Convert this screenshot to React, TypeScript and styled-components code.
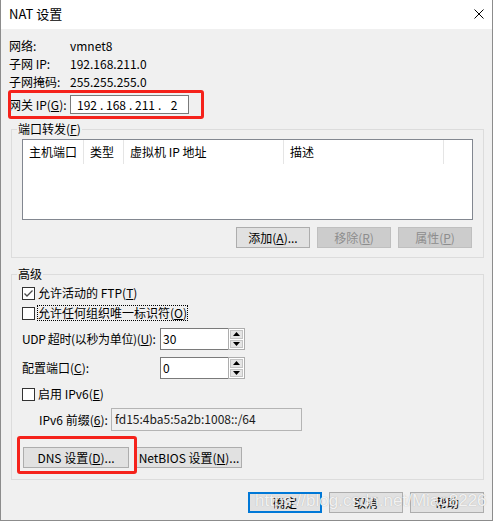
import React from "react";
import styled, { createGlobalStyle } from "styled-components";

const GlobalStyle = createGlobalStyle`
  html, body { margin: 0; padding: 0; background: #ffffff; }
  body {
    font-family: "Noto Sans CJK SC", "Microsoft YaHei", sans-serif;
    font-size: 12px;
    color: #000;
  }
  * { box-sizing: border-box; }
`;

const Window = styled.div`
  position: relative;
  width: 493px;
  height: 521px;
  border: 1px solid #8c8c8c;
  border-top: none;
  background: #f0f0f0;
  display: flex;
  flex-direction: column;
`;

const TitleBar = styled.div`
  height: 29px;
  flex-shrink: 0;
  background: #ffffff;
  display: flex;
  align-items: center;
  justify-content: space-between;
  padding: 0 8px 2px 8px;
`;

const Title = styled.span`
  font-size: 13px;
  line-height: 16px;
`;

const Body = styled.div`
  display: flex;
  flex-direction: column;
  padding: 8px 8px 0 8px;
`;

const InfoRow = styled.div<{ $h: number; $mt?: number }>`
  display: grid;
  grid-template-columns: 61px auto;
  align-items: center;
  height: ${(p) => p.$h}px;
  margin-top: ${(p) => p.$mt ?? 0}px;
  line-height: 16px;
  white-space: nowrap;
`;

const Key = styled.u`
  text-decoration: underline;
  text-underline-offset: 1px;
`;

const IpBox = styled.div`
  width: 119px;
  height: 19px;
  border: 1px solid #7a7a7a;
  background: #fff;
  display: flex;
  align-items: center;
  padding-left: 3px;
  line-height: 16px;
`;

const IpSeg = styled.span`
  width: 26px;
  text-align: center;
`;

const IpDot = styled.span`
  width: 3px;
  text-align: center;
`;

const Group = styled.fieldset<{ $mt: number }>`
  margin: ${(p) => p.$mt}px 0 0 2px;
  padding: 0;
  width: 473px;
  min-width: 0;
  border: 1px solid #dcdcdc;
`;

const Legend = styled.legend`
  margin-left: 5px;
  padding: 0 1px;
  line-height: 16px;
  font-size: 12px;
`;

const GroupInner = styled.div<{ $pt: number; $pb: number }>`
  display: flex;
  flex-direction: column;
  padding: ${(p) => p.$pt}px 10px ${(p) => p.$pb}px 10px;
`;

const ListView = styled.div`
  height: 81px;
  border: 1px solid #828790;
  background: #fff;
`;

const HeaderRow = styled.div`
  display: flex;
  height: 24px;
`;

const HeaderCell = styled.div<{ $w: number }>`
  width: ${(p) => p.$w}px;
  height: 100%;
  display: flex;
  align-items: center;
  padding-left: 6px;
  border-right: 1px solid #e5e5e5;
  line-height: 16px;
  white-space: nowrap;
`;

const ButtonRow = styled.div<{ $mt: number; $justify?: string; $pl?: number; $pr?: number }>`
  display: flex;
  justify-content: ${(p) => p.$justify ?? "flex-start"};
  gap: 7px;
  margin-top: ${(p) => p.$mt}px;
  padding-left: ${(p) => p.$pl ?? 0}px;
  padding-right: ${(p) => p.$pr ?? 0}px;
`;

const Button = styled.button<{ $w: number; $primary?: boolean }>`
  width: ${(p) => p.$w}px;
  height: 21px;
  padding: 0;
  margin: 0;
  font-family: inherit;
  font-size: 12px;
  line-height: 16px;
  color: #000;
  white-space: nowrap;
  background: #e1e1e1;
  border: ${(p) => (p.$primary ? "2px solid #0078d7" : "1px solid #adadad")};
  border-radius: 0;

  &:disabled {
    background: #cccccc;
    border-color: #bfbfbf;
    color: #8d8d8d;
  }
`;

const CheckRow = styled.div<{ $mt?: number }>`
  display: flex;
  align-items: center;
  gap: 3px;
  height: 20px;
  margin-top: ${(p) => p.$mt ?? 0}px;
  line-height: 16px;
  white-space: nowrap;
`;

const CheckBox = styled.span`
  width: 13px;
  height: 13px;
  flex-shrink: 0;
  border: 1px solid #333;
  background: #fff;
  display: inline-flex;
  align-items: center;
  justify-content: center;
`;

const FocusLabel = styled.span`
  outline: 1px dotted #000;
  line-height: 14px;
`;

const FieldRow = styled.div<{ $mt: number; $h: number; $cols: string; $pl?: number }>`
  display: grid;
  grid-template-columns: ${(p) => p.$cols};
  align-items: center;
  height: ${(p) => p.$h}px;
  margin-top: ${(p) => p.$mt}px;
  padding-left: ${(p) => p.$pl ?? 0}px;
  line-height: 16px;
  white-space: nowrap;
`;

const TightLabel = styled.span`
  letter-spacing: -0.35px;
`;

const SpinField = styled.div`
  display: flex;
  width: 85px;
  height: 22px;
`;

const SpinInput = styled.div`
  flex: 1;
  border: 1px solid #7a7a7a;
  border-right: none;
  background: #fff;
  padding: 2px 0 0 2px;
  line-height: 16px;
`;

const SpinButtons = styled.div`
  width: 17px;
  display: flex;
  flex-direction: column;
  border: 1px solid #adadad;
  background: #fff;
  padding: 1px;
  gap: 1px;
`;

const SpinButton = styled.div`
  flex: 1;
  background: #e5e5e5;
  border: 1px solid #c4c4c4;
  display: flex;
  align-items: center;
  justify-content: center;
`;

const ReadOnlyBox = styled.div`
  width: 191px;
  height: 23px;
  border: 1px solid #b4b4b4;
  background: #f0f0f0;
  padding: 2px 0 0 3px;
  line-height: 16px;
  color: #1a1a1a;
`;

const Annotation = styled.div<{ $x: number; $y: number; $w: number; $h: number }>`
  position: absolute;
  left: ${(p) => p.$x}px;
  top: ${(p) => p.$y}px;
  width: ${(p) => p.$w}px;
  height: ${(p) => p.$h}px;
  border: 3px solid #f5221b;
  border-radius: 3px;
  pointer-events: none;
`;

const Watermark = styled.div`
  position: absolute;
  left: 254px;
  top: 491px;
  font-family: "Liberation Sans", Arial, sans-serif;
  font-size: 17px;
  line-height: 20px;
  color: rgba(255, 255, 255, 0.85);
  text-shadow: 0 0 1px rgba(120, 120, 120, 0.55);
  pointer-events: none;
  white-space: nowrap;
`;

const CloseIcon = () => (
  <svg width="10" height="10" viewBox="0 0 10 10">
    <path d="M0.5 0.5 L9.5 9.5 M9.5 0.5 L0.5 9.5" stroke="#000" strokeWidth="1" fill="none" />
  </svg>
);

const Check = () => (
  <svg width="11" height="11" viewBox="0 0 11 11">
    <polyline points="1.5,5.5 4,8 9.5,2.5" stroke="#4a4a4a" strokeWidth="1.3" fill="none" />
  </svg>
);

const Arrow = ({ up }: { up?: boolean }) => (
  <svg width="7" height="4" viewBox="0 0 7 4">
    <polygon points={up ? "0,4 7,4 3.5,0" : "0,0 7,0 3.5,4"} fill="#000" />
  </svg>
);

const Spin = ({ value }: { value: string }) => (
  <SpinField>
    <SpinInput>{value}</SpinInput>
    <SpinButtons>
      <SpinButton>
        <Arrow up />
      </SpinButton>
      <SpinButton>
        <Arrow />
      </SpinButton>
    </SpinButtons>
  </SpinField>
);

export default function App() {
  return (
    <>
      <GlobalStyle />
      <Window>
        <TitleBar>
          <Title>NAT 设置</Title>
          <CloseIcon />
        </TitleBar>
        <Body>
          <InfoRow $h={18}>
            <span>网络:</span>
            <span>vmnet8</span>
          </InfoRow>
          <InfoRow $h={18}>
            <span>子网 IP:</span>
            <span>192.168.211.0</span>
          </InfoRow>
          <InfoRow $h={18}>
            <span>子网掩码:</span>
            <span>255.255.255.0</span>
          </InfoRow>
          <InfoRow $h={19} $mt={4}>
            <span>
              网关 IP(<Key>G</Key>):
            </span>
            <IpBox>
              <IpSeg>192</IpSeg>
              <IpDot>.</IpDot>
              <IpSeg>168</IpSeg>
              <IpDot>.</IpDot>
              <IpSeg>211</IpSeg>
              <IpDot>.</IpDot>
              <IpSeg>2</IpSeg>
            </IpBox>
          </InfoRow>

          <Group $mt={7}>
            <Legend>
              端口转发(<Key>F</Key>)
            </Legend>
            <GroupInner $pt={2} $pb={9}>
              <ListView>
                <HeaderRow>
                  <HeaderCell $w={61}>主机端口</HeaderCell>
                  <HeaderCell $w={40}>类型</HeaderCell>
                  <HeaderCell $w={160}>虚拟机 IP 地址</HeaderCell>
                  <HeaderCell $w={160}>描述</HeaderCell>
                </HeaderRow>
              </ListView>
              <ButtonRow $mt={7} $justify="flex-end" $pr={1}>
                <Button $w={74}>
                  添加(<Key>A</Key>)...
                </Button>
                <Button $w={74} disabled>
                  移除(<Key>R</Key>)
                </Button>
                <Button $w={74} disabled>
                  属性(<Key>P</Key>)
                </Button>
              </ButtonRow>
            </GroupInner>
          </Group>

          <Group $mt={8}>
            <Legend>高级</Legend>
            <GroupInner $pt={1} $pb={11}>
              <CheckRow>
                <CheckBox>
                  <Check />
                </CheckBox>
                <span>
                  允许活动的 FTP(<Key>T</Key>)
                </span>
              </CheckRow>
              <CheckRow>
                <CheckBox />
                <FocusLabel>
                  允许任何组织唯一标识符(<Key>O</Key>)
                </FocusLabel>
              </CheckRow>
              <FieldRow $mt={5} $h={22} $cols="138px auto">
                <TightLabel>
                  UDP 超时(以秒为单位)(<Key>U</Key>):
                </TightLabel>
                <Spin value="30" />
              </FieldRow>
              <FieldRow $mt={7} $h={22} $cols="138px auto">
                <span>
                  配置端口(<Key>C</Key>):
                </span>
                <Spin value="0" />
              </FieldRow>
              <CheckRow $mt={5}>
                <CheckBox />
                <span>
                  启用 IPv6(<Key>E</Key>)
                </span>
              </CheckRow>
              <FieldRow $mt={4} $h={23} $cols="72px auto" $pl={17}>
                <span>
                  IPv6 前缀(<Key>6</Key>):
                </span>
                <ReadOnlyBox>fd15:4ba5:5a2b:1008::/64</ReadOnlyBox>
              </FieldRow>
              <ButtonRow $mt={16} $pl={1}>
                <Button $w={106}>
                  DNS 设置(<Key>D</Key>)...
                </Button>
                <Button $w={106}>
                  NetBIOS 设置(<Key>N</Key>)...
                </Button>
              </ButtonRow>
            </GroupInner>
          </Group>

          <ButtonRow $mt={12} $justify="flex-end">
            <Button $w={74} $primary>
              确定
            </Button>
            <Button $w={74}>取消</Button>
            <Button $w={74}>帮助</Button>
          </ButtonRow>
        </Body>

        <Annotation $x={7} $y={90} $w={196} $h={29} />
        <Annotation $x={16} $y={436} $w={120} $h={38} />
        <Watermark>https://blog.csdn.net/Miao8226</Watermark>
      </Window>
    </>
  );
}
